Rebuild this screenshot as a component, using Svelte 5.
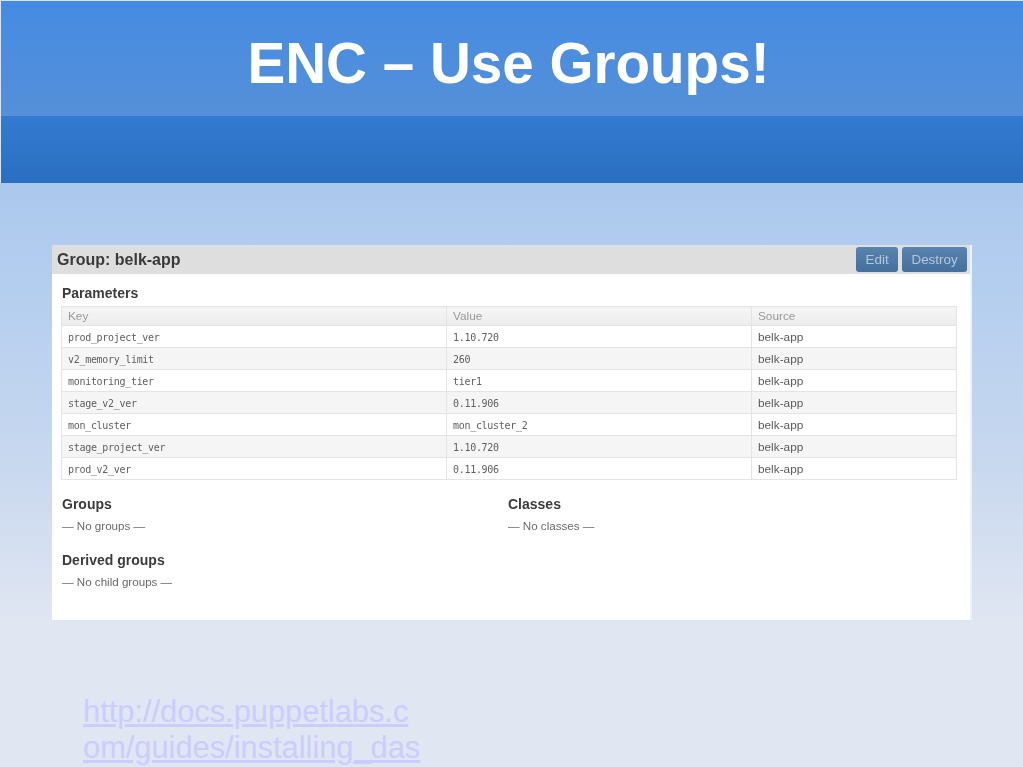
<script>
  const params = [
    ['prod_project_ver', '1.10.720'],
    ['v2_memory_limit', '260'],
    ['monitoring_tier', 'tier1'],
    ['stage_v2_ver', '0.11.906'],
    ['mon_cluster', 'mon_cluster_2'],
    ['stage_project_ver', '1.10.720'],
    ['prod_v2_ver', '0.11.906']
  ];
</script>

<div class="slide">
  <header>
    <div class="title-band"><h1>ENC – Use Groups!</h1></div>
    <div class="lower-band"></div>
  </header>

  <main>
    <section class="card">
      <div class="card-head">
        <h2>Group: belk-app</h2>
        <div class="actions">
          <button type="button">Edit</button>
          <button type="button">Destroy</button>
        </div>
      </div>

      <div class="card-body">
        <h3>Parameters</h3>
        <table>
          <thead>
            <tr><th class="c-key">Key</th><th class="c-val">Value</th><th>Source</th></tr>
          </thead>
          <tbody>
            {#each params as [key, value]}
              <tr>
                <td class="mono">{key}</td>
                <td class="mono">{value}</td>
                <td>belk-app</td>
              </tr>
            {/each}
          </tbody>
        </table>

        <div class="columns">
          <div>
            <h3>Groups</h3>
            <p>— No groups —</p>
          </div>
          <div>
            <h3>Classes</h3>
            <p>— No classes —</p>
          </div>
        </div>

        <h3>Derived groups</h3>
        <p>— No child groups —</p>
      </div>
    </section>

    <a class="link" href="#docs">http://docs.puppetlabs.c<br />om/guides/installing_das</a>
  </main>
</div>

<style>
  :global(body) {
    margin: 0;
  }
  .slide {
    width: 1023px;
    height: 767px;
    overflow: hidden;
    display: flex;
    flex-direction: column;
    font-family: "Liberation Sans", Arial, sans-serif;
    background: #e0e6f2;
  }
  header {
    flex-shrink: 0;
    padding: 1px 0 0 1px;
    background: #d9e4f2;
  }
  .title-band {
    height: 115px;
    display: flex;
    justify-content: center;
    padding-right: 7px;
    background: linear-gradient(#458be3, #5590d8);
  }
  h1 {
    margin: 32px 0 0;
    font-size: 56.6px;
    line-height: 62px;
    font-weight: 700;
    color: #fff;
  }
  .lower-band {
    height: 67px;
    background: linear-gradient(#337ad0, #2a6fc0);
  }
  main {
    flex: 1;
    min-height: 0;
    padding: 62px 0 0 52px;
    background: linear-gradient(#abc8ed 0, #b4ceef 100px, #c8d8ef 280px, #e0e6f2 440px);
  }
  .card {
    width: 918px;
    height: 375px;
    background: #fff;
    border-right: 2px solid #eef3fa;
    color: #333;
    filter: blur(0.35px);
  }
  .card-head {
    height: 29px;
    display: flex;
    align-items: center;
    justify-content: space-between;
    padding: 0 3px 0 5px;
    background: #dedede;
  }
  h2 {
    margin: 0;
    font-size: 16px;
    font-weight: 700;
    color: #3a3a3a;
  }
  .actions {
    display: flex;
    gap: 4px;
    margin-top: 0;
  }
  button {
    height: 25px;
    padding: 0 9.4px;
    border: 0;
    border-radius: 3px;
    font: 13.4px "Liberation Sans", Arial, sans-serif;
    color: #b6c6d8;
    background: linear-gradient(#5a83ae, #44709f);
  }
  .card-body {
    padding: 11px 13px 0 10px;
  }
  h3 {
    margin: 0;
    font-size: 14px;
    line-height: 17px;
    font-weight: 700;
    color: #3c3c3c;
  }
  table {
    width: 896px;
    margin: 4px 0 0 -1px;
    border-collapse: collapse;
    table-layout: fixed;
    font-size: 11.8px;
    color: #5a5a5a;
  }
  th, td {
    height: 21px;
    padding: 0 6px;
    border: 1px solid #e4e4e4;
    text-align: left;
    font-weight: 400;
    box-sizing: border-box;
  }
  th {
    height: 19px;
    color: #999;
    background: linear-gradient(#f6f6f6, #ececec);
  }
  .c-key {
    width: 385px;
  }
  .c-val {
    width: 305px;
  }
  tbody tr {
    height: 22px;
  }
  tbody tr:nth-child(even) td {
    background: #f5f5f5;
  }
  td.mono {
    padding-top: 2px;
    font-family: "DejaVu Sans Mono", monospace;
    font-size: 10px;
    letter-spacing: -0.3px;
    color: #606060;
  }
  .columns {
    display: grid;
    grid-template-columns: 446px 1fr;
    margin-top: 16px;
  }
  p {
    margin: 5px 0 18px;
    font-size: 11.6px;
    line-height: 16px;
    color: #6a6a6a;
  }
  .link {
    display: block;
    margin: 74px 0 0 31px;
    font-size: 30.8px;
    line-height: 36px;
    color: #ccccff;
  }
</style>
